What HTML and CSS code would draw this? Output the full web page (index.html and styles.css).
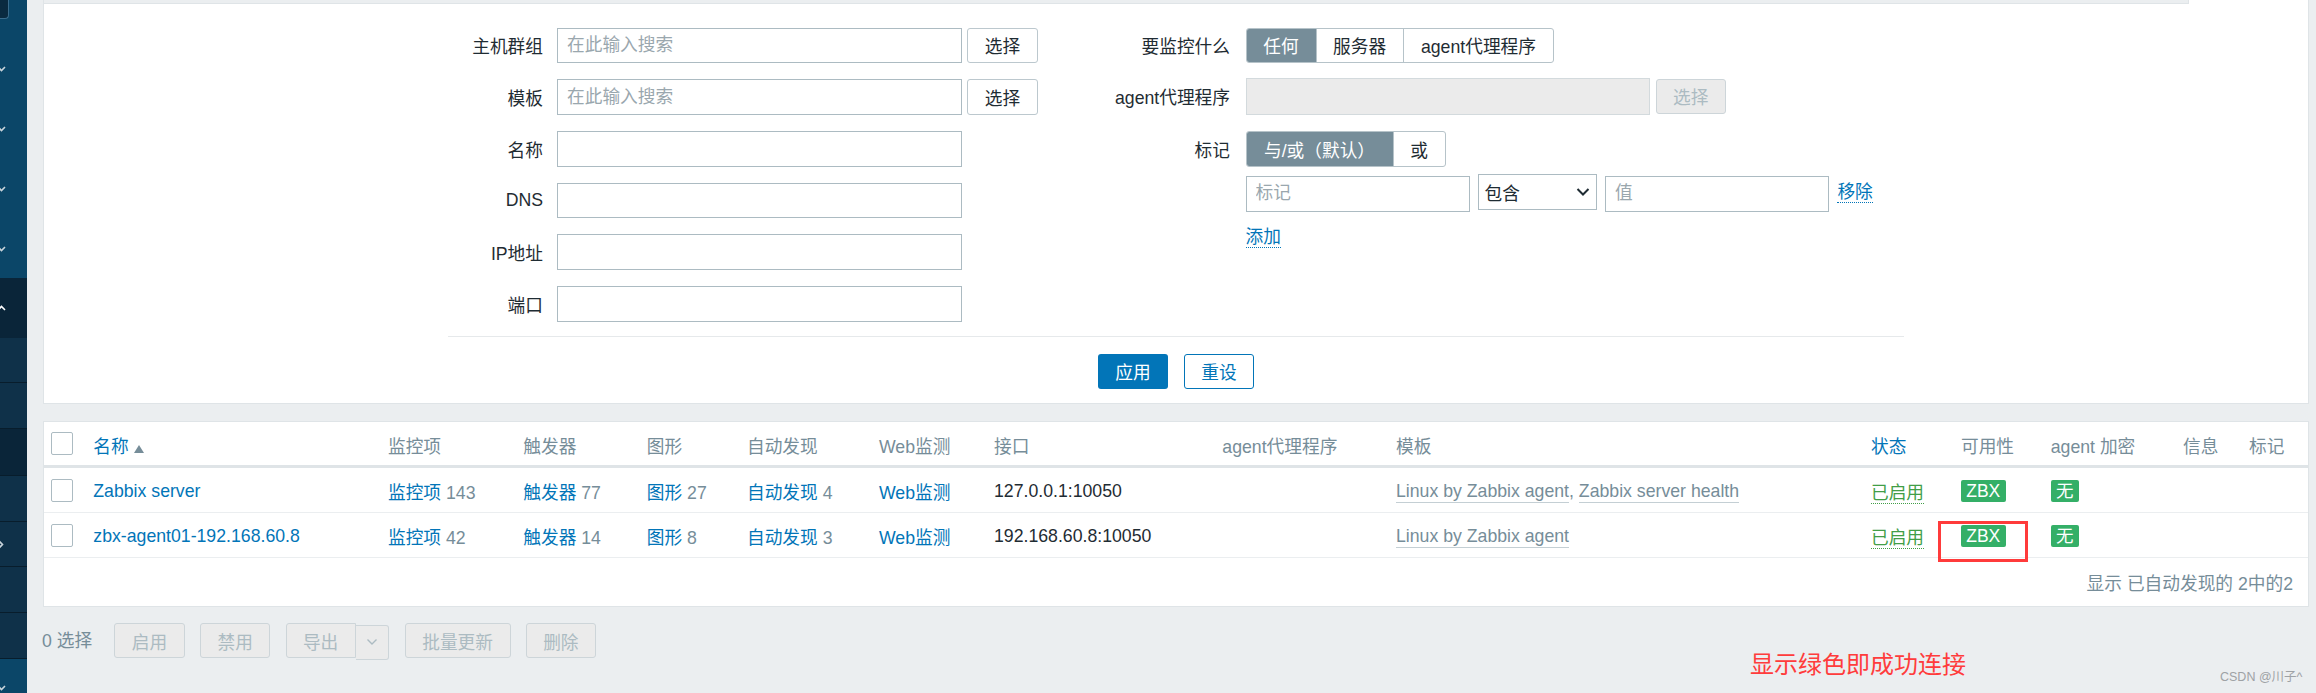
FILE: index.html
```html
<!DOCTYPE html>
<html lang="zh-CN">
<head>
<meta charset="utf-8">
<title>主机</title>
<link rel="stylesheet" href="styles.css">
</head>
<body>
<div class="app">
  <aside class="sidebar">
    <div class="sb-main">
      <div class="sb-box"></div>
      <div class="sb-items">
        <div class="sb-item"><svg class="chev" width="9" height="6" viewBox="0 0 9 6"><polyline points="1,1 4.5,4.5 8,1"/></svg></div>
        <div class="sb-item"><svg class="chev" width="9" height="6" viewBox="0 0 9 6"><polyline points="1,1 4.5,4.5 8,1"/></svg></div>
        <div class="sb-item"><svg class="chev" width="9" height="6" viewBox="0 0 9 6"><polyline points="1,1 4.5,4.5 8,1"/></svg></div>
        <div class="sb-item"><svg class="chev" width="9" height="6" viewBox="0 0 9 6"><polyline points="1,1 4.5,4.5 8,1"/></svg></div>
      </div>
    </div>
    <div class="sb-active"><svg class="chev up" width="9" height="6" viewBox="0 0 9 6"><polyline points="1,5 4.5,1.5 8,5"/></svg></div>
    <div class="sb-sub h45"></div>
    <div class="sb-sub h46"></div>
    <div class="sb-sub h47 dark"></div>
    <div class="sb-sub h46"></div>
    <div class="sb-sub h45"><svg class="chev right" width="6" height="9" viewBox="0 0 6 9"><polyline points="1,1 4.5,4.5 1,8"/></svg></div>
    <div class="sb-sub h46"></div>
    <div class="sb-sub h46"></div>
    <div class="sb-bottom"><svg class="chev" width="9" height="6" viewBox="0 0 9 6"><polyline points="1,1 4.5,4.5 8,1"/></svg></div>
  </aside>

  <main class="main">
    <section class="filter">
      <div class="filter-tabstrip"></div>
      <div class="filter-form">
        <div class="fcol fcol-left">
          <div class="frow"><span class="flabel">主机群组</span><div class="fctl"><input class="inp" placeholder="在此输入搜索"><button class="btn-grey">选择</button></div></div>
          <div class="frow"><span class="flabel">模板</span><div class="fctl"><input class="inp" placeholder="在此输入搜索"><button class="btn-grey">选择</button></div></div>
          <div class="frow"><span class="flabel">名称</span><div class="fctl"><input class="inp"></div></div>
          <div class="frow"><span class="flabel">DNS</span><div class="fctl"><input class="inp"></div></div>
          <div class="frow"><span class="flabel">IP地址</span><div class="fctl"><input class="inp"></div></div>
          <div class="frow"><span class="flabel">端口</span><div class="fctl"><input class="inp"></div></div>
        </div>
        <div class="fcol fcol-right">
          <div class="rrow r1"><span class="flabel">要监控什么</span>
            <div class="seg">
              <span class="seg-i on w70">任何</span><span class="seg-i w87">服务器</span><span class="seg-i w150">agent代理程序</span>
            </div>
          </div>
          <div class="rrow r2"><span class="flabel">agent代理程序</span>
            <div class="fctl"><div class="inp-dis"></div><button class="btn-dis sel-dis">选择</button></div>
          </div>
          <div class="rrow r3"><span class="flabel">标记</span>
            <div class="seg">
              <span class="seg-i on w147">与/或（默认）</span><span class="seg-i w52">或</span>
            </div>
          </div>
          <div class="rrow r4"><span class="flabel"></span>
            <div class="tagrow">
              <input class="inp tag-inp" placeholder="标记">
              <div class="select"><span>包含</span><svg width="14" height="10" viewBox="0 0 14 10"><polyline points="1.5,2 7,7.5 12.5,2"/></svg></div>
              <input class="inp tag-inp val-inp" placeholder="值">
              <a class="link-dot">移除</a>
            </div>
          </div>
          <div class="rrow r5"><span class="flabel"></span>
            <div><a class="link-dot">添加</a></div>
          </div>
        </div>
      </div>
      <div class="filter-sep"></div>
      <div class="filter-actions">
        <button class="btn-primary">应用</button>
        <button class="btn-alt">重设</button>
      </div>
    </section>

    <section class="list">
      <table class="hosts">
        <colgroup>
          <col class="c-chk"><col class="c-name"><col class="c-items"><col class="c-trig"><col class="c-graph"><col class="c-disc"><col class="c-web"><col class="c-if"><col class="c-proxy"><col class="c-tpl"><col class="c-status"><col class="c-avail"><col class="c-enc"><col class="c-info"><col class="c-tags">
        </colgroup>
        <thead>
          <tr>
            <th><span class="chk"></span></th>
            <th><a class="link">名称</a><svg class="sort" width="12" height="10" viewBox="0 0 12 10"><polygon points="6,1 11,9 1,9"/></svg></th>
            <th>监控项</th>
            <th>触发器</th>
            <th>图形</th>
            <th>自动发现</th>
            <th>Web监测</th>
            <th>接口</th>
            <th>agent代理程序</th>
            <th>模板</th>
            <th><a class="link">状态</a></th>
            <th>可用性</th>
            <th>agent 加密</th>
            <th>信息</th>
            <th>标记</th>
          </tr>
        </thead>
        <tbody>
          <tr>
            <td><span class="chk"></span></td>
            <td><a class="link">Zabbix server</a></td>
            <td><a class="link">监控项</a><span class="cnt"> 143</span></td>
            <td><a class="link">触发器</a><span class="cnt"> 77</span></td>
            <td><a class="link">图形</a><span class="cnt"> 27</span></td>
            <td><a class="link">自动发现</a><span class="cnt"> 4</span></td>
            <td><a class="link">Web监测</a></td>
            <td>127.0.0.1:10050</td>
            <td></td>
            <td><a class="link-alt">Linux by Zabbix agent</a><span class="cnt">, </span><a class="link-alt">Zabbix server health</a></td>
            <td><a class="status-on">已启用</a></td>
            <td><span class="badge">ZBX</span></td>
            <td><span class="badge">无</span></td>
            <td></td>
            <td></td>
          </tr>
          <tr>
            <td><span class="chk"></span></td>
            <td><a class="link">zbx-agent01-192.168.60.8</a></td>
            <td><a class="link">监控项</a><span class="cnt"> 42</span></td>
            <td><a class="link">触发器</a><span class="cnt"> 14</span></td>
            <td><a class="link">图形</a><span class="cnt"> 8</span></td>
            <td><a class="link">自动发现</a><span class="cnt"> 3</span></td>
            <td><a class="link">Web监测</a></td>
            <td>192.168.60.8:10050</td>
            <td></td>
            <td><a class="link-alt">Linux by Zabbix agent</a></td>
            <td><a class="status-on">已启用</a></td>
            <td><span class="badge">ZBX</span></td>
            <td><span class="badge">无</span></td>
            <td></td>
            <td></td>
          </tr>
        </tbody>
      </table>
      <div class="list-footer">显示 已自动发现的 2中的2</div>
    </section>

    <div class="actions">
      <span class="selcount">0 选择</span>
      <button class="btn-dis w71">启用</button>
      <button class="btn-dis w70">禁用</button>
      <div class="split">
        <button class="btn-dis w70 split-main">导出</button>
        <button class="btn-dis split-drop"><svg width="12" height="8" viewBox="0 0 12 8"><polyline points="1.5,1.5 6,6 10.5,1.5"/></svg></button>
      </div>
      <button class="btn-dis w106">批量更新</button>
      <button class="btn-dis w70">删除</button>
    </div>
  </main>
</div>

<div class="redbox"></div>
<div class="note">显示绿色即成功连接</div>
<div class="watermark">CSDN @川子^</div>
</body>
</html>
```

FILE: styles.css
```css
* { box-sizing: border-box; margin: 0; padding: 0; }
html, body { width: 2316px; height: 693px; overflow: hidden; }
body {
  background: #ebeef0;
  font-family: "Liberation Sans", "Noto Sans CJK SC", Arial, sans-serif;
  font-size: 17.7px;
  color: #1f2c33;
  position: relative;
}
button, input { font-family: inherit; font-size: inherit; }

.app { display: flex; height: 693px; }

/* ---------- sidebar ---------- */
.sidebar {
  width: 27px; flex: none;
  display: flex; flex-direction: column;
  background: #0b4668; overflow: hidden;
}
.sb-main { height: 278px; flex: none; }
.sb-box {
  width: 9px; height: 19px;
  background: #0a2a40;
  border-right: 1px solid #3a6c8c; border-bottom: 1px solid #3a6c8c;
  border-radius: 0 0 4px 0;
}
.sb-items { margin-top: 19.5px; }
.sb-item { height: 60px; display: flex; align-items: center; }
.chev { display: block; margin-left: -3px; fill: none; stroke: #c9d4db; stroke-width: 1.6; }
.chev.up { stroke: #ffffff; }
.chev.right { margin-left: -2px; }
.sb-active { height: 60px; flex: none; background: #0a2539; display: flex; align-items: center; }
.sb-sub {
  flex: none; background: #0f3149;
  border-bottom: 1px solid #081d2c;
  display: flex; align-items: center;
}
.sb-sub.dark { background: #0a2539; }
.h45 { height: 45px; } .h46 { height: 46px; } .h47 { height: 47px; }
.sb-bottom { flex: 1; background: #0b4668; display: flex; align-items: flex-start; padding-top: 26px; }

/* ---------- main ---------- */
.main { flex: 1; padding: 0 7px 0 16px; display: flex; flex-direction: column; }

/* ---------- filter ---------- */
.filter {
  height: 404px; flex: none;
  background: #fff;
  border: 1px solid #dfe4e7; border-top: none;
}
.filter-tabstrip {
  width: 2145px; height: 4px;
  background: #ebeef0;
  border-right: 1px solid #dfe4e7; border-bottom: 1px solid #dfe4e7;
}
.filter-form { display: flex; align-items: flex-start; padding-left: 399px; margin-top: 23.7px; }
.fcol-left { display: flex; flex-direction: column; gap: 16.2px; }
.frow {
  display: grid; grid-template-columns: 100px 481px; column-gap: 14px;
  height: 35.5px; align-items: center;
}
.flabel { text-align: right; white-space: nowrap; }
.fctl { display: flex; align-items: center; height: 100%; }
.inp {
  width: 405px; height: 35.5px;
  border: 1px solid #acbbc2; background: #fff;
  padding: 0 9px; color: #1f2c33; outline: none;
}
.inp::placeholder { color: #9aa7ae; }
.btn-grey {
  width: 71px; height: 35.5px; margin-left: 5px;
  background: #fff; border: 1px solid #bcc8ce; border-radius: 3px; color: #1f2c33;
}

.fcol-right { margin-left: 42px; display: flex; flex-direction: column; }
.rrow { display: grid; grid-template-columns: 150px auto; column-gap: 15.5px; align-items: center; justify-items: start; }
.rrow > .flabel { justify-self: end; }
.r1 { margin-top: 0.6px; height: 34.4px; }
.r2 { margin-top: 15.6px; height: 36.4px; }
.r3 { margin-top: 16.6px; height: 35.4px; }
.r4 { margin-top: 7.6px; height: 37.4px; align-items: start; }
.r5 { margin-top: 14px; height: 24px; }

.seg { display: flex; height: 100%; border: 1px solid #b6c3c9; border-radius: 3px; overflow: hidden; }
.seg-i { display: flex; align-items: center; justify-content: center; border-left: 1px solid #b6c3c9; color: #1f2c33; white-space: nowrap; }
.seg-i:first-child { border-left: none; }
.seg-i.on { background: #768d99; color: #fff; }
.w70 { width: 69px; } .w87 { width: 87.3px; } .w150 { width: 150.3px; }
.w147 { width: 146px; } .w52 { width: 52.4px; }

.inp-dis { width: 404.3px; height: 36.4px; background: #ebebeb; border: 1px solid #d3dadd; }
.sel-dis { width: 70px; height: 36.4px; margin-left: 6px; }

.tagrow { display: flex; align-items: flex-start; gap: 8px; }
.tag-inp { width: 224px; margin-top: 1.7px; height: 35.7px; }
.val-inp { width: 224.5px; }
.select {
  width: 119.4px; height: 35.4px;
  border: 1px solid #acbbc2; background: #fff;
  display: flex; align-items: center; justify-content: space-between;
  padding: 0 6px 0 6px;
}
.select svg { fill: none; stroke: #1f2c33; stroke-width: 2; }
.link-dot { color: #0275b8; text-decoration: none; border-bottom: 1.5px dotted #0275b8; line-height: 20px; display: inline-block; }
.tagrow .link-dot { margin-top: 8px; }

.filter-sep { width: 1456px; height: 1px; background: #e6e9eb; margin: 14.4px auto 0; }
.filter-actions { display: flex; justify-content: center; gap: 15.4px; margin-top: 16.6px; }
.btn-primary {
  width: 70.5px; height: 35.4px; border: none; border-radius: 3px;
  background: #0275b8; color: #fff;
}
.btn-alt {
  width: 70.5px; height: 35.4px; border: 1px solid #0275b8; border-radius: 3px;
  background: #fff; color: #0275b8;
}

/* ---------- list ---------- */
.list {
  margin-top: 16.7px; height: 186px; flex: none;
  background: #fff; border: 1px solid #dfe4e7;
}
.hosts { width: 2264px; table-layout: fixed; border-collapse: separate; border-spacing: 0; }
.c-chk { width: 49.3px; } .c-name { width: 294.7px; } .c-items { width: 135.3px; }
.c-trig { width: 123.5px; } .c-graph { width: 100.2px; } .c-disc { width: 132px; }
.c-web { width: 115px; } .c-if { width: 228.4px; } .c-proxy { width: 173.6px; }
.c-tpl { width: 475px; } .c-status { width: 90px; } .c-avail { width: 89.8px; }
.c-enc { width: 132.2px; } .c-info { width: 66px; } .c-tags { width: 59px; }
.hosts th {
  height: 46.6px; text-align: left; font-weight: normal; color: #768d99;
  border-bottom: 3.3px solid #dfe4e7; vertical-align: middle; white-space: nowrap; padding-top: 3px;
}
.hosts td {
  height: 45px; border-bottom: 1px solid #ebeef0; vertical-align: middle; white-space: nowrap;
  padding-top: 2px;
}
.hosts th:first-child, .hosts td:first-child { padding-left: 6.5px; }
.hosts th:first-child { padding-top: 0; }
.hosts td:first-child { padding-top: 0; }
.chk {
  display: block; width: 22px; height: 22.5px;
  border: 1px solid #acbbc2; border-radius: 2px; background: #fff;
}
.link { color: #0275b8; text-decoration: none; }
.sort { display: inline-block; margin-left: 4px; fill: #768d99; vertical-align: -1px; }
.cnt { color: #768d99; }
.link-alt { color: #768d99; text-decoration: none; border-bottom: 1.5px solid #c4cfd4; padding-bottom: 1px; }
.status-on { color: #429e47; text-decoration: none; border-bottom: 1.5px dotted #429e47; }
.badge {
  display: inline-block; height: 22.4px; line-height: 22.4px;
  padding: 0 5.3px; border-radius: 2px;
  background: #34af67; color: #fff; font-size: 17.5px;
}
.list-footer {
  height: 47.4px; display: flex; align-items: center; justify-content: flex-end;
  padding-right: 15px; color: #768d99;
}

/* ---------- actions ---------- */
.actions { display: flex; align-items: flex-start; margin-top: 16.3px; margin-left: -1px; }
.selcount { color: #768d99; height: 35.4px; line-height: 37px; width: 72px; }
.btn-dis {
  height: 35.4px; background: #ebebeb; border: 1px solid #cdd5d9; border-radius: 3px;
  color: #acbbc2;
}
.actions > .btn-dis, .actions > .split { margin-right: 15.3px; }
.w71 { width: 71px; } .w106 { width: 106px; }
.btn-dis.w70 { width: 70px; }
.split { display: flex; align-items: flex-start; }
.split-main { border-radius: 3px 0 0 3px; }
.split-drop {
  width: 33.7px; height: 35.4px; margin-top: 1.7px; border-left: none; border-radius: 0 3px 3px 0;
  display: flex; align-items: center; justify-content: center;
}
.split-drop svg { fill: none; stroke: #acbbc2; stroke-width: 1.4; }

/* ---------- annotations ---------- */
.redbox {
  position: absolute; left: 1938px; top: 520.7px; width: 89.7px; height: 41px;
  border: 3px solid #ff3b3b;
}
.note {
  position: absolute; left: 1750px; top: 648px;
  font-family: "Noto Sans CJK SC", sans-serif; font-size: 24px; line-height: 30px;
  color: #ff3c3c; white-space: nowrap;
}
.watermark {
  position: absolute; left: 2220px; top: 669px;
  font-size: 12.5px; line-height: 16px; color: #9ea2a5; white-space: nowrap;
}
```
